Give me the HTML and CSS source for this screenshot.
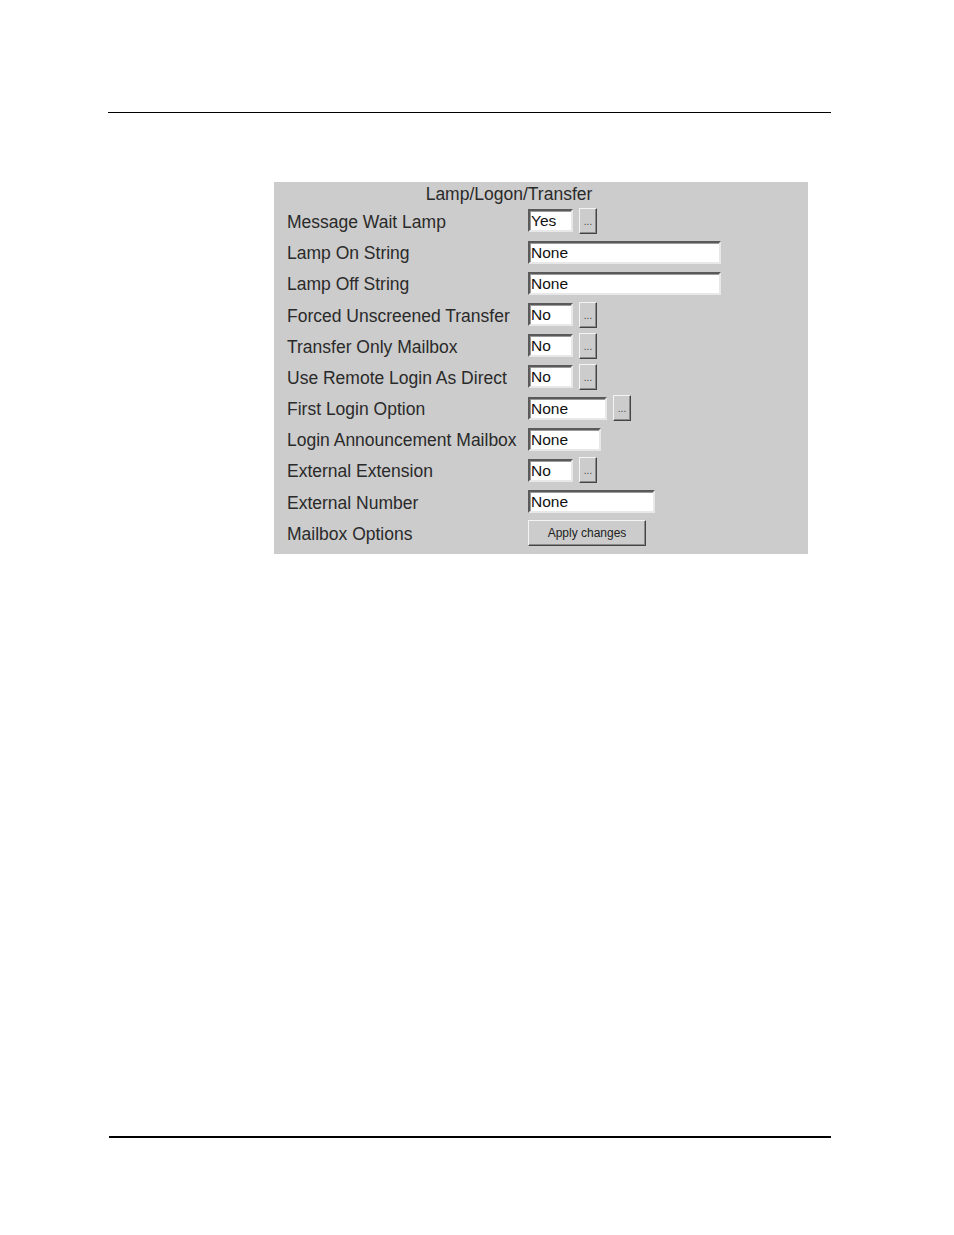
FILE: index.html
```html
<!DOCTYPE html>
<html>
<head>
<meta charset="utf-8">
<link rel="stylesheet" href="styles.css">
</head>
<body>
<div class="page">
  <hr class="rule-top">
  <div class="panel">
    <div class="title">Lamp/Logon/Transfer</div>
    <div class="form">
      <div class="row"><span class="label">Message Wait Lamp</span><span class="ctrl"><span class="field w-s">Yes</span><span class="more">...</span></span></div>
      <div class="row"><span class="label">Lamp On String</span><span class="ctrl"><span class="field w-l">None</span></span></div>
      <div class="row"><span class="label">Lamp Off String</span><span class="ctrl"><span class="field w-l">None</span></span></div>
      <div class="row"><span class="label">Forced Unscreened Transfer</span><span class="ctrl"><span class="field w-s">No</span><span class="more">...</span></span></div>
      <div class="row"><span class="label">Transfer Only Mailbox</span><span class="ctrl"><span class="field w-s">No</span><span class="more">...</span></span></div>
      <div class="row"><span class="label">Use Remote Login As Direct</span><span class="ctrl"><span class="field w-s">No</span><span class="more">...</span></span></div>
      <div class="row"><span class="label">First Login Option</span><span class="ctrl"><span class="field w-m">None</span><span class="more">...</span></span></div>
      <div class="row"><span class="label">Login Announcement Mailbox</span><span class="ctrl"><span class="field w-a">None</span></span></div>
      <div class="row"><span class="label">External Extension</span><span class="ctrl"><span class="field w-s">No</span><span class="more">...</span></span></div>
      <div class="row"><span class="label">External Number</span><span class="ctrl"><span class="field w-n">None</span></span></div>
      <div class="row"><span class="label">Mailbox Options</span><span class="ctrl"><span class="apply">Apply changes</span></span></div>
    </div>
  </div>
  <hr class="rule-bottom">
</div>
</body>
</html>
```

FILE: styles.css
```css
html, body {
  margin: 0;
  padding: 0;
  background: #ffffff;
}

.page {
  padding-top: 112px;
  font-family: "Liberation Sans", Arial, sans-serif;
}

.rule-top {
  margin: 0 0 0 108px;
  width: 723px;
  height: 1px;
  border: 0;
  background: #000;
}

.rule-bottom {
  margin: 582px 0 0 109px;
  width: 722px;
  height: 2px;
  border: 0;
  background: #000;
}

.panel {
  margin: 69px 0 0 274px;
  width: 534px;
  height: 372px;
  box-sizing: border-box;
  background: #cccccc;
  padding: 0 0 0 13px;
}

.title {
  width: 444px;
  height: 23.4px;
  line-height: 23.4px;
  padding-top: 1px;
  box-sizing: border-box;
  text-align: center;
  font-size: 17.5px;
  color: #2a2a2a;
}

.form {
  display: flex;
  flex-direction: column;
}

.row {
  height: 31.2px;
  display: flex;
  align-items: center;
}

.label {
  width: 241px;
  padding-top: 3px;
  font-size: 17.5px;
  color: #2a2a2a;
  white-space: nowrap;
}

.ctrl {
  display: flex;
  align-items: center;
  gap: 6px;
}

.field {
  box-sizing: border-box;
  height: 23px;
  background: #fff;
  border-style: solid;
  border-width: 2px;
  border-color: #5a5a5a #e8e8e8 #e8e8e8 #5a5a5a;
  box-shadow: inset 1px 1px 0 #9a9a9a;
  font-size: 15.5px;
  line-height: 19px;
  padding: 0 0 0 1px;
  color: #111;
  white-space: nowrap;
  overflow: hidden;
}

.w-s { width: 45px; }
.w-m { width: 79px; }
.w-a { width: 73px; }
.w-n { width: 127px; }
.w-l { width: 193px; }

.more {
  box-sizing: border-box;
  width: 18px;
  height: 26px;
  background: #cccccc;
  border-style: solid;
  border-width: 1px;
  border-color: #f4f4f4 #444 #444 #f4f4f4;
  box-shadow: inset -1px -1px 0 #8a8a8a;
  font-size: 10px;
  color: #444;
  text-align: center;
  line-height: 26px;
}

.apply {
  box-sizing: border-box;
  width: 118px;
  height: 26px;
  background: #cccccc;
  border-style: solid;
  border-width: 1px;
  border-color: #f4f4f4 #444 #444 #f4f4f4;
  box-shadow: inset -1px -1px 0 #8a8a8a;
  font-size: 12px;
  color: #222;
  text-align: center;
  line-height: 25px;
}
```
